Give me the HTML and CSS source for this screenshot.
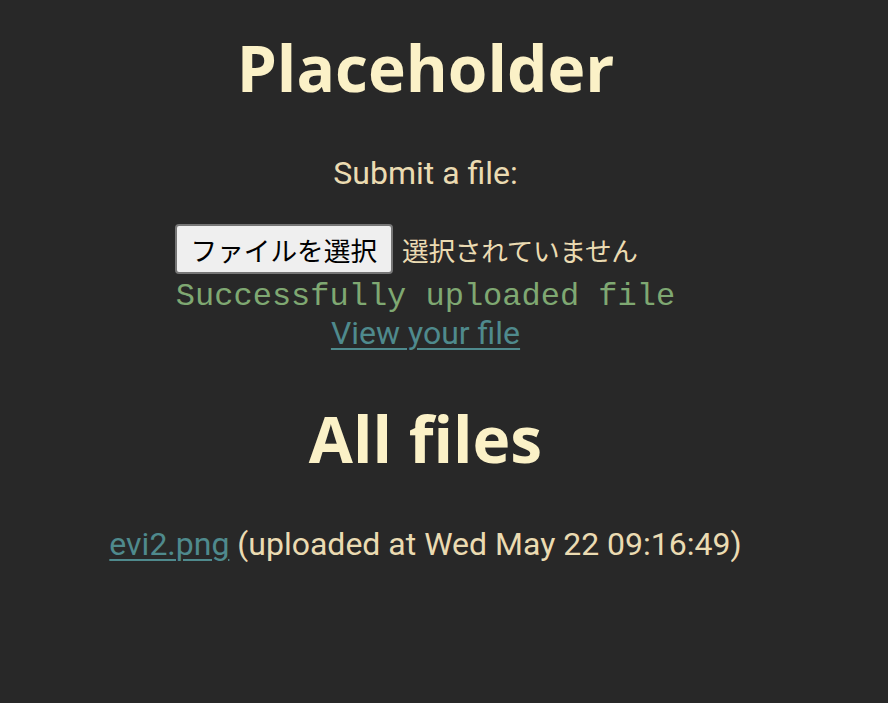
FILE: index.html
```html
<!DOCTYPE html>
<html lang="ja">
<head>
<meta charset="utf-8">
<title>Placeholder</title>
<link rel="stylesheet" href="styles.css">
</head>
<body>
<main class="page">
  <h1 class="title main-title">Placeholder</h1>
  <form class="upload">
    <p class="label">Submit a file:</p>
    <div class="picker">
      <span class="btn">ファイルを選択</span>
      <span class="none">選択されていません</span>
    </div>
  </form>
  <p class="success">Successfully uploaded file</p>
  <a class="link view" href="#">View your file</a>
  <h2 class="title files-title">All files</h2>
  <p class="file-row"><a class="link" href="#">evi2.png</a> (uploaded at Wed May 22 09:16:49)</p>
</main>
</body>
</html>
```

FILE: styles.css
```css
html, body {
  margin: 0;
  padding: 0;
  background: #282828;
  height: 100%;
}
body {
  font-family: Roboto, "Noto Sans CJK JP", sans-serif;
  color: #ebdbb2;
}
.page {
  width: 851px;
  display: flex;
  flex-direction: column;
  align-items: center;
  text-align: center;
}
.title {
  font-family: "Open Sans", sans-serif;
  font-weight: 700;
  color: #fbf1c7;
  margin: 0;
  font-size: 64px;
  line-height: 88px;
}
.main-title {
  margin-top: 24px;
}
.upload {
  display: flex;
  flex-direction: column;
  align-items: center;
}
.label {
  font-size: 32px;
  line-height: 38px;
  margin: 42px 0 0;
}
.picker {
  display: flex;
  align-items: center;
  justify-content: flex-start;
  gap: 9px;
  width: 502px;
  height: 50px;
  margin-top: 32px;
  font-size: 26.67px;
  font-family: "Noto Sans CJK JP", sans-serif;
}
.btn {
  background: #efefef;
  color: #000;
  border: 2px solid #767676;
  border-radius: 4px;
  padding: 0 14px;
  height: 46px;
  display: flex;
  align-items: center;
}
.none {
  color: #ebdbb2;
  letter-spacing: -0.3px;
}
.success {
  font-family: "Liberation Mono", monospace;
  color: #7fa872;
  font-size: 32px;
  line-height: 36px;
  margin: 5px 0 0;
}
.link {
  color: #4f8a8d;
  text-decoration: underline;
  text-decoration-thickness: 2px;
  text-underline-offset: 4px;
}
.view {
  font-size: 32px;
  line-height: 36px;
}
.files-title {
  margin-top: 44px;
}
.file-row {
  font-size: 32px;
  line-height: 38px;
  margin: 42px 0 0;
}
```
